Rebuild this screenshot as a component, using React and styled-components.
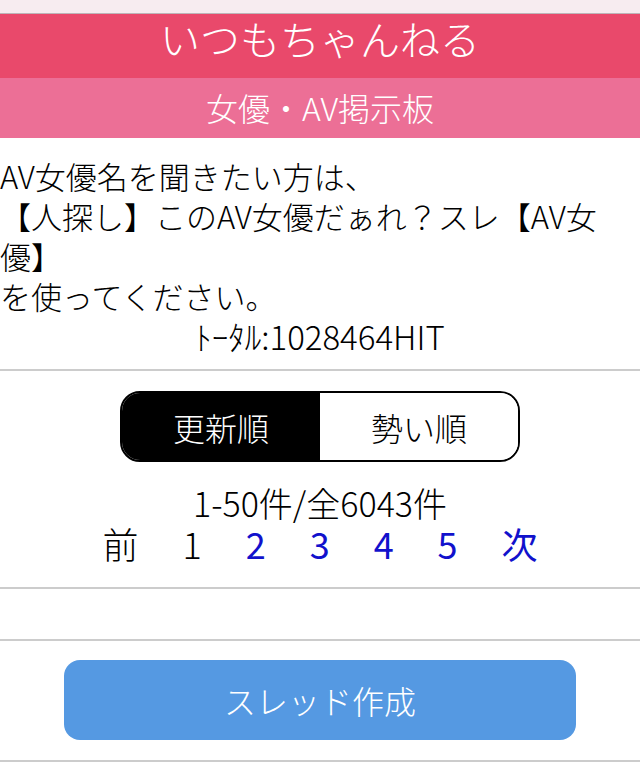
import React from "react";
import styled, { createGlobalStyle } from "styled-components";

const Global = createGlobalStyle`
  html, body { margin: 0; padding: 0; background: #fff; }
  body { font-family: "Noto Sans CJK JP", "Noto Sans", sans-serif; font-weight: 300; color: #000; }
`;

const Page = styled.div`
  width: 640px;
  display: flex;
  flex-direction: column;
`;

const TopStrip = styled.div`
  height: 13px;
  background: #f7ecf0;
  border-bottom: 1px solid #bdb4b8;
`;

const Title = styled.h1`
  margin: 0;
  height: 64px;
  background: #e9496b;
  color: #fff;
  font-size: 40px;
  font-weight: 300;
  line-height: 48px;
  text-align: center;
`;

const SubTitle = styled.h2`
  margin: 0;
  height: 60px;
  background: #ec6f96;
  color: #fff;
  font-size: 32px;
  font-weight: 300;
  line-height: 58px;
  text-align: center;
`;

const Section = styled.section`
  padding: ${(p) => p.$pad || "0"};
  border-bottom: 2px solid #cccccc;
  min-height: ${(p) => p.$minH || "0"};
`;

const Intro = styled.p`
  margin: 0;
  font-size: 31px;
  line-height: 40px;
`;

const Total = styled.div`
  font-size: 33px;
  line-height: 40px;
  text-align: center;
`;

const SortWrap = styled.div`
  display: flex;
  flex-direction: column;
  align-items: center;
`;

const Toggle = styled.div`
  width: 400px;
  height: 71px;
  box-sizing: border-box;
  border: 2px solid #000;
  border-radius: 20px;
  overflow: hidden;
  display: flex;
`;

const ToggleItem = styled.div`
  flex: 1;
  display: flex;
  align-items: center;
  justify-content: center;
  font-size: 32px;
  background: ${(p) => (p.$active ? "#000" : "#fff")};
  color: ${(p) => (p.$active ? "#fff" : "#000")};
`;

const Count = styled.div`
  margin-top: 21px;
  font-size: 34px;
  line-height: 40px;
  text-align: center;
`;

const Pager = styled.div`
  display: flex;
  justify-content: center;
  gap: 44px;
  font-size: 36px;
  line-height: 40px;
`;

const PageItem = styled.span`
  color: ${(p) => (p.$link ? "#1111cc" : "#000")};
  font-weight: ${(p) => (p.$link ? 400 : 300)};
`;

const CreateButton = styled.button`
  display: block;
  width: 512px;
  height: 80px;
  margin: 0 auto;
  border: none;
  border-radius: 16px;
  background: #5599e2;
  color: #fff;
  font-family: inherit;
  font-weight: 300;
  font-size: 32px;
`;

export default function App() {
  return (
    <Page>
      <Global />
      <TopStrip />
      <Title>いつもちゃんねる</Title>
      <SubTitle>女優・AV掲示板</SubTitle>
      <Section $pad="18px 0 13px">
        <Intro>
          AV女優名を聞きたい方は、
          <br />
          【人探し】このAV女優だぁれ？スレ【AV女優】
          <br />
          を使ってください。
        </Intro>
        <Total>ﾄｰﾀﾙ:1028464HIT</Total>
      </Section>
      <Section $pad="20px 0 24px">
        <SortWrap>
          <Toggle>
            <ToggleItem $active>更新順</ToggleItem>
            <ToggleItem>勢い順</ToggleItem>
          </Toggle>
        </SortWrap>
        <Count>1-50件/全6043件</Count>
        <Pager>
          <PageItem>前</PageItem>
          <PageItem>1</PageItem>
          <PageItem $link>2</PageItem>
          <PageItem $link>3</PageItem>
          <PageItem $link>4</PageItem>
          <PageItem $link>5</PageItem>
          <PageItem $link>次</PageItem>
        </Pager>
      </Section>
      <Section $minH="50px" />
      <Section $pad="19px 0 20px">
        <CreateButton>スレッド作成</CreateButton>
      </Section>
    </Page>
  );
}
